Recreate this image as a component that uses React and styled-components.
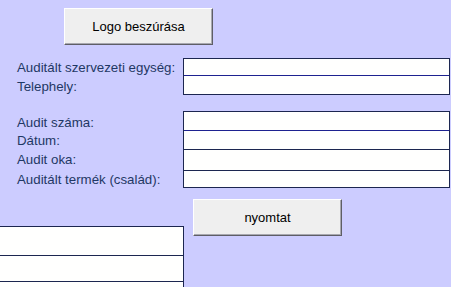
import React from "react";
import styled, { createGlobalStyle } from "styled-components";

const GlobalStyle = createGlobalStyle`
  html, body {
    margin: 0;
    padding: 0;
    background: #ccccff;
    overflow: hidden;
  }
  body {
    font-family: "Liberation Sans", Arial, sans-serif;
  }
`;

const Page = styled.div`
  width: 451px;
  height: 287px;
  background: #ccccff;
  padding-top: 8px;
  box-sizing: border-box;
  overflow: hidden;
`;

const Button = styled.button`
  display: block;
  width: 149px;
  height: 37px;
  margin: 0 0 0 ${(p) => p.$left}px;
  padding: 0;
  background: #efefef;
  border: 1px solid;
  border-color: #ffffff #5e5e66 #5e5e66 #ffffff;
  box-shadow: inset -1px -1px 0 #a8a8b0;
  font-family: "Liberation Sans", Arial, sans-serif;
  font-size: 13px;
  color: #000;
  text-align: center;
  box-sizing: border-box;
  cursor: default;
`;

const FieldGroup = styled.div`
  display: flex;
  align-items: flex-start;
  margin-top: ${(p) => p.$top}px;
`;

const LabelColumn = styled.div`
  width: 183px;
  display: flex;
  flex-direction: column;
`;

const Label = styled.div`
  height: ${(p) => p.$h}px;
  padding-left: 17px;
  padding-top: ${(p) => p.$shift || 0}px;
  box-sizing: border-box;
  display: flex;
  align-items: center;
  font-size: 13.3px;
  color: #1f3864;
  white-space: nowrap;
`;

const Box = styled.div`
  width: ${(p) => p.$w}px;
  border: 1px solid #1c2650;
  box-sizing: border-box;
  background: #fffffe;
  display: flex;
  flex-direction: column;
`;

const Cell = styled.div`
  height: ${(p) => p.$h}px;
  flex: none;
  box-sizing: border-box;
  border-bottom: 1px solid ${(p) => (p.$blue ? "#1e2290" : "#1c2650")};
  &:last-child {
    border-bottom: none;
  }
`;

const BottomRow = styled.div`
  display: flex;
  align-items: flex-start;
  margin-top: 11px;
`;

const LeftBox = styled(Box)`
  margin-top: 27px;
  margin-left: -2px;
  margin-right: 9px;
`;

const group1 = [
  { label: "Auditált szervezeti egység:", h: 17, lh: 18, blue: true, shift: 1 },
  { label: "Telephely:", h: 18, lh: 19, shift: 1 },
];

const group2 = [
  { label: "Audit száma:", h: 19, lh: 20, blue: true, shift: 3 },
  { label: "Dátum:", h: 19, lh: 18, shift: 1 },
  { label: "Audit oka:", h: 21, lh: 20, shift: 1 },
  { label: "Auditált termék (család):", h: 16, lh: 19, shift: 1 },
];

function Group({ rows, top }) {
  return (
    <FieldGroup $top={top}>
      <LabelColumn>
        {rows.map((r) => (
          <Label key={r.label} $h={r.lh} $shift={r.shift}>
            {r.label}
          </Label>
        ))}
      </LabelColumn>
      <Box $w={267}>
        {rows.map((r, i) => (
          <Cell key={i} $h={r.h} $blue={r.blue} />
        ))}
      </Box>
    </FieldGroup>
  );
}

export default function App() {
  return (
    <>
      <GlobalStyle />
      <Page>
        <Button $left={64}>Logo beszúrása</Button>
        <Group rows={group1} top={13} />
        <Group rows={group2} top={16} />
        <BottomRow>
          <LeftBox $w={186}>
            <Cell $h={29} />
            <Cell $h={26} />
            <Cell $h={30} />
          </LeftBox>
          <Button $left={0}>nyomtat</Button>
        </BottomRow>
      </Page>
    </>
  );
}
